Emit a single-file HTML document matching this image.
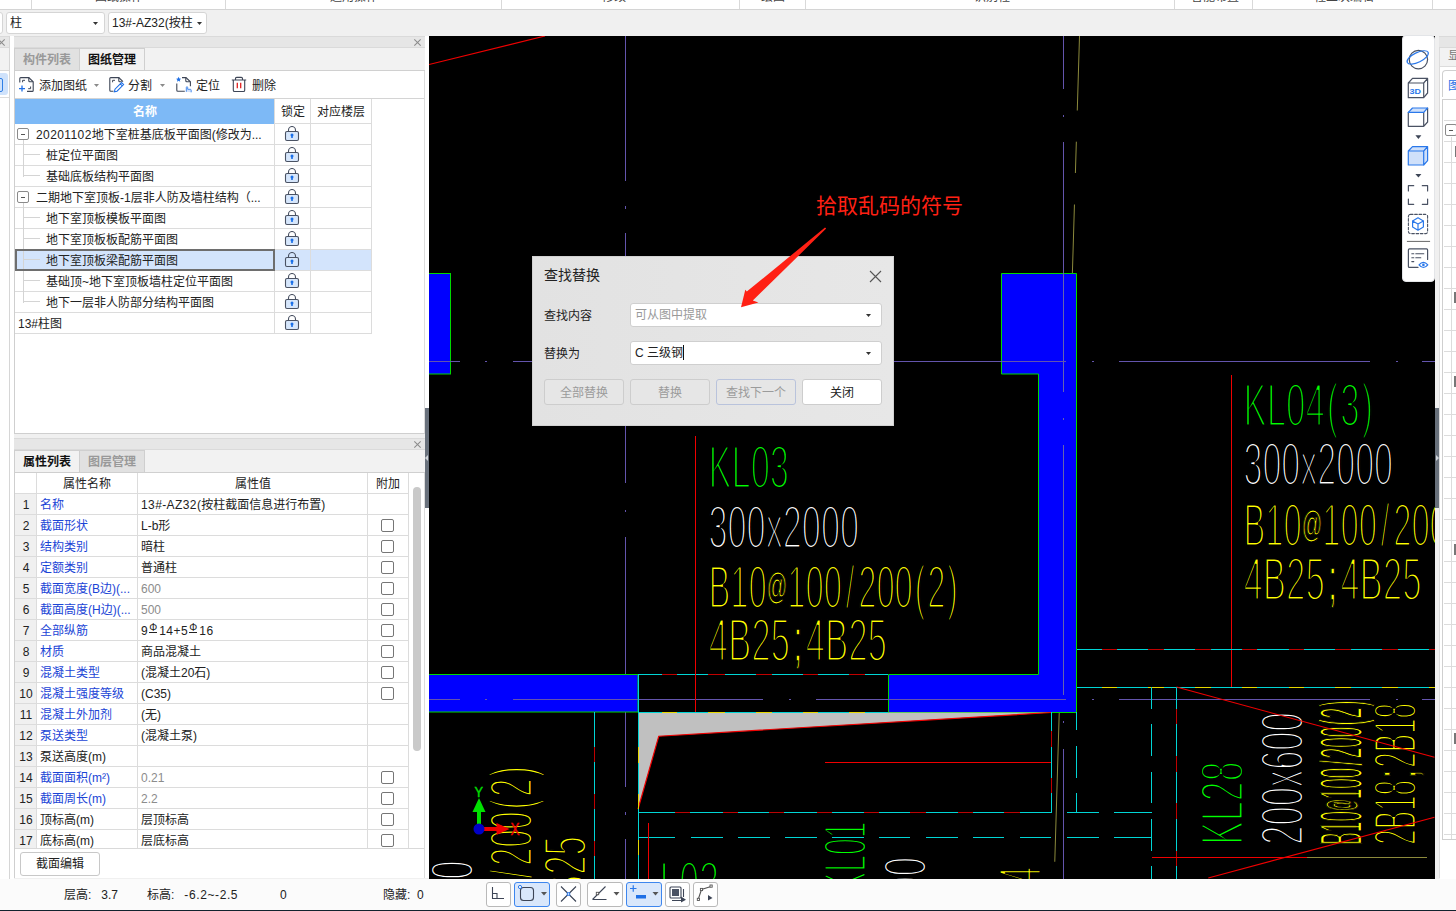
<!DOCTYPE html>
<html lang="zh-CN">
<head>
<meta charset="utf-8">
<title>查找替换</title>
<style>
*{box-sizing:border-box;margin:0;padding:0}
html,body{width:1456px;height:911px;overflow:hidden}
body{position:relative;background:#f0f0f0;font-family:"Liberation Sans","Noto Sans CJK SC",sans-serif;font-size:12px;color:#222;line-height:1}
.abs{position:absolute}
.t{position:absolute;white-space:nowrap;line-height:16px;height:16px}
/* top strip */
#strip{left:0;top:0;width:1456px;height:10px;background:#fff;border-bottom:1px solid #d4d4d4;overflow:hidden}
#strip .sep{position:absolute;top:0;width:1px;height:9px;background:#d9d9d9}
#strip .lb{position:absolute;top:-10px;line-height:14px;font-size:12px;color:#444;white-space:nowrap;transform:translateX(-50%)}
#tbar{left:0;top:10px;width:1456px;height:26px;background:#f0f0f0}
.dd{position:absolute;top:12px;height:22px;background:#fff;border:1px solid #d5d5d5;border-radius:3px;line-height:20px;padding-left:3px;white-space:nowrap;overflow:hidden}
.dd i{position:absolute;right:6px;top:9px;width:5px;height:3px;background:#333;clip-path:polygon(0 0,100% 0,50% 100%)}
/* panels */
.phead{position:absolute;background:#e6e6e6;border-top:1px solid #dadada;border-bottom:1px solid #dadada}
.px{position:absolute;width:9px;height:9px}
.px:before,.px:after{content:"";position:absolute;left:4px;top:0;width:1px;height:9px;background:#8a8a8a}
.px:before{transform:rotate(45deg)}.px:after{transform:rotate(-45deg)}
.tab{position:absolute;height:23px;width:65px;text-align:center;line-height:22px;border:1px solid #cfcfcf;font-weight:bold;font-size:12px}
.tab.off{background:#e1e1e1;color:#999}
.tab.on{background:#f2f2f2;color:#111}
.gl{background:#dcdcdc}
.tl{background:#d4d4d4}
.bx{width:12px;height:12px;border:1px solid #8a8a8a;border-radius:2px;background:#fff}
.bx:after{content:"";position:absolute;left:3px;top:4.5px;width:4px;height:1px;background:#555}
.ck{width:13px;height:13px;border:1px solid #767676;border-radius:2px;background:#fff}
.car{position:absolute;width:5px;height:3px;background:#8a8a8a;clip-path:polygon(0 0,100% 0,50% 100%)}
.phi{display:inline-block;font-weight:normal;font-size:10px;width:8px;margin:0 2px 0 1px;text-align:center;line-height:8px;height:9px;border-bottom:1px solid #222;position:relative;top:-4px;overflow:visible}
.inp{position:absolute;width:252px;height:24px;background:#fff;border:1px solid #cfcfcf;border-radius:3px;line-height:22px;padding-left:4px;white-space:nowrap}
.inp i{position:absolute;right:10px;top:10px;width:5px;height:3px;background:#333;clip-path:polygon(0 0,100% 0,50% 100%)}
.inp b{display:inline-block;width:1px;height:15px;background:#111;vertical-align:-3px;margin-left:0}
.btn{position:absolute;top:122px;width:80px;height:26px;border:1px solid #cdcdcd;border-radius:3px;text-align:center;line-height:26px;background:#e6e6e6;color:#9b9b9b}
.bb{position:absolute;top:882px;height:25px;background:#fff;border:1px solid #b9b9b9;border-radius:3px}
.bb.on{background:#d9e7fb;border-color:#3d86ee}

</style>
</head>
<body>
<svg width="0" height="0" style="position:absolute"><defs><g id="lock"><path d="M4.500 5.500V4.200a3.500 3.700 0 0 1 7 0V5.500" fill="none" stroke="#4a5263" stroke-width="1.100"/><rect x="1.500" y="5.500" width="13" height="9" rx="1.500" fill="#d6e6fb" stroke="#4a5263" stroke-width="1.100"/><circle cx="8" cy="9" r="1.500" fill="#1a6fe8"/><rect x="7.200" y="9" width="1.600" height="3" fill="#1a6fe8"/></g></defs></svg>
<!-- ribbon remainder -->
<div id="strip" class="abs">
<span class="sep" style="left:31px"></span><span class="sep" style="left:225px"></span><span class="sep" style="left:501px"></span><span class="sep" style="left:739px"></span><span class="sep" style="left:805px"></span><span class="sep" style="left:1174px"></span><span class="sep" style="left:1252px"></span><span class="sep" style="left:1432px"></span>
<span class="lb" style="left:119px">图纸操作</span><span class="lb" style="left:354px">通用操作</span><span class="lb" style="left:614px">修改</span><span class="lb" style="left:773px">绘图</span><span class="lb" style="left:992px">识别柱</span><span class="lb" style="left:1215px">智能布置</span><span class="lb" style="left:1344px">柱二次编辑</span>
</div>
<div id="tbar" class="abs"></div>
<div class="dd" style="left:-20px;width:23px"></div>
<div class="dd" style="left:6px;width:99px;font-size:12px">柱<i></i></div>
<div class="dd" style="left:108px;width:99px;font-size:12px">13#-AZ32(按柱<i style="right:4px"></i></div>
<div class="abs" style="left:0;top:36px;width:10px;height:843px;background:#fff;border-right:1px solid #d6d6d6"></div>
<div class="abs" style="left:0;top:48px;width:9px;height:23px;background:#f2f2f2;border-bottom:1px solid #d8d8d8"></div>
<div class="abs" style="left:0;top:97px;width:9px;height:1px;background:#dcdcdc"></div>
<div class="abs" style="left:10px;top:36px;width:4px;height:843px;background:#fff"></div>
<div class="abs" style="left:0;top:36px;width:9px;height:12px;background:#e6e6e6;border-top:1px solid #dadada;border-bottom:1px solid #dadada"></div>
<div class="px" style="left:-3px;top:38px"></div>
<div class="abs" style="left:-6px;top:73px;width:14px;height:22px;background:#cfe2fb;border-radius:3px"></div>
<div class="abs" style="left:-8px;top:78px;width:11px;height:14px;border:1.5px solid #2f7fe6;border-radius:2px"></div>
<div class="abs" style="left:14px;top:36px;width:411px;height:398px;background:#fff;border-left:1px solid #cfcfcf;border-bottom:1px solid #cfcfcf;border-right:1px solid #dcdcdc"></div>
<div class="phead" style="left:14px;top:36px;width:411px;height:12px"></div>
<div class="px" style="left:413px;top:38px"></div>
<div class="abs" style="left:14px;top:48px;width:411px;height:23px;background:#f2f2f2;border-bottom:1px solid #d0d0d0"></div>
<div class="tab off" style="left:14px;top:48px;width:66px">构件列表</div>
<div class="tab on" style="left:79px;top:48px;width:66px">图纸管理</div>
<div class="abs" style="left:15px;top:71px;width:409px;height:28px;background:#fff;border-bottom:1px solid #d4d4d4"></div>
<svg class="abs" style="left:18px;top:76px" width="18" height="17" viewBox="0 0 18 17" fill="none" stroke="#3d4556" stroke-width="1.1"><path d="M1.8 6.5V2.6q0-1 1-1h8l4.4 4.2v8.6q0 1-1 1H9"/><path d="M10.8 1.6v3.2q0 1 1 1h3.2" /><path d="M4.6 6.3V4.3h2.4M12.6 10.5v2.2h-2.4" stroke-width="1"/><path d="M4 9.6v6M1 12.6h6" stroke="#1f6fe5" stroke-width="1.3"/></svg>
<svg class="abs" style="left:108px;top:76px" width="18" height="17" viewBox="0 0 18 17" fill="none" stroke="#3d4556" stroke-width="1.1"><path d="M5.5 15.3H2.8q-1 0-1-1V2.6q0-1 1-1h8l4.2 4"/><path d="M10.8 1.6v3.2q0 1 1 1h2" /><path d="M4.6 6.3V4.3h2.4" stroke-width="1"/><path d="M13.6 6.6l2 2-6.6 6.6-2.6.6.6-2.6z M12.3 7.9l2 2" stroke="#1f6fe5" stroke-width="1.1"/></svg>
<svg class="abs" style="left:175px;top:76px" width="18" height="17" viewBox="0 0 18 17" fill="none" stroke="#3d4556" stroke-width="1.1"><path d="M1.8 7.5v6.8q0 1 1 1h7"/><path d="M7 1.6h4l4.4 4.2v4.4"/><path d="M10.8 1.6v3.2q0 1 1 1h3.2"/><path d="M3.6.8l.8 1.6 1.7.3-1.3 1.2.4 1.8-1.6-.9-1.6.9.4-1.800-1.300-1.200 1.700-.3z" fill="#1f6fe5" stroke="none"/><path d="M11.300 15.800v-4.300q0-.8.700-.8t.7.800v1.800h2.600q.9 0 .9.900v2.100" stroke="#4a8bec" fill="#cfe1fb" stroke-width="1"/></svg>
<svg class="abs" style="left:231px;top:76px" width="16" height="17" viewBox="0 0 16 17" fill="none" stroke="#3d4556" stroke-width="1.1"><path d="M.8 4h14.400M4.500 4V2.600q0-1.200 1.200-1.200h4.600q1.200 0 1.200 1.200V4M2.300 4v10.200q0 1.300 1.300 1.300h8.800q1.300 0 1.300-1.300V4"/><path d="M6.300 6.800v5.400M9.700 6.800v5.400" stroke="#e02020" stroke-width="1.3"/></svg>

<span class="t" style="left:39px;top:78px">添加图纸</span>
<span class="t" style="left:128px;top:78px">分割</span>
<span class="t" style="left:196px;top:78px">定位</span>
<span class="t" style="left:252px;top:78px">删除</span>
<i class="car" style="left:94px;top:84px"></i><i class="car" style="left:160px;top:84px"></i>
<div class="abs" style="left:15px;top:99px;width:260px;height:25px;background:#7db9f6"></div>
<span class="t" style="left:133px;top:104px;color:#fff;font-weight:bold">名称</span>
<span class="t" style="left:281px;top:104px">锁定</span>
<span class="t" style="left:317px;top:104px">对应楼层</span>
<div class="abs" style="left:15px;top:250px;width:356px;height:21px;background:#d3e4fc"></div>
<div class="abs gl" style="left:275px;top:123px;width:97px;height:1px"></div>
<div class="abs gl" style="left:15px;top:144px;width:357px;height:1px"></div>
<div class="abs gl" style="left:15px;top:165px;width:357px;height:1px"></div>
<div class="abs gl" style="left:15px;top:186px;width:357px;height:1px"></div>
<div class="abs gl" style="left:15px;top:207px;width:357px;height:1px"></div>
<div class="abs gl" style="left:15px;top:228px;width:357px;height:1px"></div>
<div class="abs gl" style="left:15px;top:249px;width:357px;height:1px"></div>
<div class="abs gl" style="left:15px;top:270px;width:357px;height:1px"></div>
<div class="abs gl" style="left:15px;top:291px;width:357px;height:1px"></div>
<div class="abs gl" style="left:15px;top:312px;width:357px;height:1px"></div>
<div class="abs gl" style="left:15px;top:333px;width:357px;height:1px"></div>
<div class="abs gl" style="left:274px;top:99px;width:1px;height:235px"></div>
<div class="abs gl" style="left:310px;top:99px;width:1px;height:235px"></div>
<div class="abs gl" style="left:371px;top:99px;width:1px;height:235px"></div>
<div class="abs tl" style="left:23px;top:140px;width:1px;height:37px"></div>
<div class="abs tl" style="left:23px;top:203px;width:1px;height:100px"></div>
<div class="abs bx" style="left:17px;top:128px"></div>
<span class="t" style="left:36px;top:127px"><span style="letter-spacing:.4px">20201102</span>地下室桩基底板平面图(修改为...</span>
<svg class="abs" style="left:284px;top:126px" width="16" height="17" viewBox="0 0 16 17"><use href="#lock"/></svg>
<div class="abs tl" style="left:23px;top:154px;width:17px;height:1px"></div>
<span class="t" style="left:46px;top:148px">桩定位平面图</span>
<svg class="abs" style="left:284px;top:147px" width="16" height="17" viewBox="0 0 16 17"><use href="#lock"/></svg>
<div class="abs tl" style="left:23px;top:175px;width:17px;height:1px"></div>
<span class="t" style="left:46px;top:169px">基础底板结构平面图</span>
<svg class="abs" style="left:284px;top:168px" width="16" height="17" viewBox="0 0 16 17"><use href="#lock"/></svg>
<div class="abs bx" style="left:17px;top:191px"></div>
<span class="t" style="left:36px;top:190px">二期地下室顶板-1层非人防及墙柱结构（...</span>
<svg class="abs" style="left:284px;top:189px" width="16" height="17" viewBox="0 0 16 17"><use href="#lock"/></svg>
<div class="abs tl" style="left:23px;top:217px;width:17px;height:1px"></div>
<span class="t" style="left:46px;top:211px">地下室顶板模板平面图</span>
<svg class="abs" style="left:284px;top:210px" width="16" height="17" viewBox="0 0 16 17"><use href="#lock"/></svg>
<div class="abs tl" style="left:23px;top:238px;width:17px;height:1px"></div>
<span class="t" style="left:46px;top:232px">地下室顶板板配筋平面图</span>
<svg class="abs" style="left:284px;top:231px" width="16" height="17" viewBox="0 0 16 17"><use href="#lock"/></svg>
<div class="abs tl" style="left:23px;top:259px;width:17px;height:1px"></div>
<span class="t" style="left:46px;top:253px">地下室顶板梁配筋平面图</span>
<svg class="abs" style="left:284px;top:252px" width="16" height="17" viewBox="0 0 16 17"><use href="#lock"/></svg>
<div class="abs tl" style="left:23px;top:280px;width:17px;height:1px"></div>
<span class="t" style="left:46px;top:274px">基础顶~地下室顶板墙柱定位平面图</span>
<svg class="abs" style="left:284px;top:273px" width="16" height="17" viewBox="0 0 16 17"><use href="#lock"/></svg>
<div class="abs tl" style="left:23px;top:301px;width:17px;height:1px"></div>
<span class="t" style="left:46px;top:295px">地下一层非人防部分结构平面图</span>
<svg class="abs" style="left:284px;top:294px" width="16" height="17" viewBox="0 0 16 17"><use href="#lock"/></svg>
<span class="t" style="left:18px;top:316px">13#柱图</span>
<svg class="abs" style="left:284px;top:315px" width="16" height="17" viewBox="0 0 16 17"><use href="#lock"/></svg>
<div class="abs" style="left:15px;top:249px;width:260px;height:22px;border:2px solid #6e6e6e"></div>
<div class="abs" style="left:14px;top:438px;width:411px;height:440px;background:#fff;border-left:1px solid #cfcfcf;border-right:1px solid #dcdcdc"></div>
<div class="phead" style="left:14px;top:438px;width:411px;height:12px"></div>
<div class="px" style="left:413px;top:440px"></div>
<div class="abs" style="left:14px;top:450px;width:411px;height:23px;background:#f2f2f2;border-bottom:1px solid #d0d0d0"></div>
<div class="tab on" style="left:14px;top:450px;width:66px;height:23px">属性列表</div>
<div class="tab off" style="left:79px;top:450px;width:66px;height:23px">图层管理</div>
<span class="t" style="left:63px;top:476px">属性名称</span>
<span class="t" style="left:235px;top:476px">属性值</span>
<span class="t" style="left:376px;top:476px">附加</span>
<div class="abs" style="left:15px;top:494px;width:22px;height:354px;background:#f0f0f0"></div>
<div class="abs gl" style="left:15px;top:493px;width:394px;height:1px"></div>
<div class="abs gl" style="left:15px;top:514px;width:394px;height:1px"></div>
<div class="abs gl" style="left:15px;top:535px;width:394px;height:1px"></div>
<div class="abs gl" style="left:15px;top:556px;width:394px;height:1px"></div>
<div class="abs gl" style="left:15px;top:577px;width:394px;height:1px"></div>
<div class="abs gl" style="left:15px;top:598px;width:394px;height:1px"></div>
<div class="abs gl" style="left:15px;top:619px;width:394px;height:1px"></div>
<div class="abs gl" style="left:15px;top:640px;width:394px;height:1px"></div>
<div class="abs gl" style="left:15px;top:661px;width:394px;height:1px"></div>
<div class="abs gl" style="left:15px;top:682px;width:394px;height:1px"></div>
<div class="abs gl" style="left:15px;top:703px;width:394px;height:1px"></div>
<div class="abs gl" style="left:15px;top:724px;width:394px;height:1px"></div>
<div class="abs gl" style="left:15px;top:745px;width:394px;height:1px"></div>
<div class="abs gl" style="left:15px;top:766px;width:394px;height:1px"></div>
<div class="abs gl" style="left:15px;top:787px;width:394px;height:1px"></div>
<div class="abs gl" style="left:15px;top:808px;width:394px;height:1px"></div>
<div class="abs gl" style="left:15px;top:829px;width:394px;height:1px"></div>
<div class="abs gl" style="left:36px;top:473px;width:1px;height:375px"></div>
<div class="abs gl" style="left:137px;top:473px;width:1px;height:375px"></div>
<div class="abs gl" style="left:367px;top:473px;width:1px;height:375px"></div>
<div class="abs gl" style="left:408px;top:473px;width:1px;height:375px"></div>
<span class="t" style="left:15px;width:22px;text-align:center;top:497px">1</span>
<span class="t" style="left:40px;top:497px;color:#1a44d6">名称</span>
<span class="t" style="left:141px;top:497px;color:#222"><span style="letter-spacing:.4px">13#-AZ32(</span>按柱截面信息进行布置)</span>
<span class="t" style="left:15px;width:22px;text-align:center;top:518px">2</span>
<span class="t" style="left:40px;top:518px;color:#1a44d6">截面形状</span>
<span class="t" style="left:141px;top:518px;color:#222">L-b形</span>
<div class="abs ck" style="left:381px;top:519px"></div>
<span class="t" style="left:15px;width:22px;text-align:center;top:539px">3</span>
<span class="t" style="left:40px;top:539px;color:#1a44d6">结构类别</span>
<span class="t" style="left:141px;top:539px;color:#222">暗柱</span>
<div class="abs ck" style="left:381px;top:540px"></div>
<span class="t" style="left:15px;width:22px;text-align:center;top:560px">4</span>
<span class="t" style="left:40px;top:560px;color:#1a44d6">定额类别</span>
<span class="t" style="left:141px;top:560px;color:#222">普通柱</span>
<div class="abs ck" style="left:381px;top:561px"></div>
<span class="t" style="left:15px;width:22px;text-align:center;top:581px">5</span>
<span class="t" style="left:40px;top:581px;color:#1a44d6">截面宽度(B边)(...</span>
<span class="t" style="left:141px;top:581px;color:#8c8c8c">600</span>
<div class="abs ck" style="left:381px;top:582px"></div>
<span class="t" style="left:15px;width:22px;text-align:center;top:602px">6</span>
<span class="t" style="left:40px;top:602px;color:#1a44d6">截面高度(H边)(...</span>
<span class="t" style="left:141px;top:602px;color:#8c8c8c">500</span>
<div class="abs ck" style="left:381px;top:603px"></div>
<span class="t" style="left:15px;width:22px;text-align:center;top:623px">7</span>
<span class="t" style="left:40px;top:623px;color:#1a44d6">全部纵筋</span>
<span class="t" style="left:141px;top:623px;color:#222"><span style="letter-spacing:.5px">9<b class="phi">Φ</b>14+5<b class="phi">Φ</b>16</span></span>
<div class="abs ck" style="left:381px;top:624px"></div>
<span class="t" style="left:15px;width:22px;text-align:center;top:644px">8</span>
<span class="t" style="left:40px;top:644px;color:#1a44d6">材质</span>
<span class="t" style="left:141px;top:644px;color:#222">商品混凝土</span>
<div class="abs ck" style="left:381px;top:645px"></div>
<span class="t" style="left:15px;width:22px;text-align:center;top:665px">9</span>
<span class="t" style="left:40px;top:665px;color:#1a44d6">混凝土类型</span>
<span class="t" style="left:141px;top:665px;color:#222">(混凝土20石)</span>
<div class="abs ck" style="left:381px;top:666px"></div>
<span class="t" style="left:15px;width:22px;text-align:center;top:686px">10</span>
<span class="t" style="left:40px;top:686px;color:#1a44d6">混凝土强度等级</span>
<span class="t" style="left:141px;top:686px;color:#222">(C35)</span>
<div class="abs ck" style="left:381px;top:687px"></div>
<span class="t" style="left:15px;width:22px;text-align:center;top:707px">11</span>
<span class="t" style="left:40px;top:707px;color:#1a44d6">混凝土外加剂</span>
<span class="t" style="left:141px;top:707px;color:#222">(无)</span>
<span class="t" style="left:15px;width:22px;text-align:center;top:728px">12</span>
<span class="t" style="left:40px;top:728px;color:#1a44d6">泵送类型</span>
<span class="t" style="left:141px;top:728px;color:#222">(混凝土泵)</span>
<span class="t" style="left:15px;width:22px;text-align:center;top:749px">13</span>
<span class="t" style="left:40px;top:749px;color:#222">泵送高度(m)</span>
<span class="t" style="left:15px;width:22px;text-align:center;top:770px">14</span>
<span class="t" style="left:40px;top:770px;color:#1a44d6">截面面积(m²)</span>
<span class="t" style="left:141px;top:770px;color:#8c8c8c">0.21</span>
<div class="abs ck" style="left:381px;top:771px"></div>
<span class="t" style="left:15px;width:22px;text-align:center;top:791px">15</span>
<span class="t" style="left:40px;top:791px;color:#1a44d6">截面周长(m)</span>
<span class="t" style="left:141px;top:791px;color:#8c8c8c">2.2</span>
<div class="abs ck" style="left:381px;top:792px"></div>
<span class="t" style="left:15px;width:22px;text-align:center;top:812px">16</span>
<span class="t" style="left:40px;top:812px;color:#222">顶标高(m)</span>
<span class="t" style="left:141px;top:812px;color:#222">层顶标高</span>
<div class="abs ck" style="left:381px;top:813px"></div>
<span class="t" style="left:15px;width:22px;text-align:center;top:833px">17</span>
<span class="t" style="left:40px;top:833px;color:#222">底标高(m)</span>
<span class="t" style="left:141px;top:833px;color:#222">层底标高</span>
<div class="abs ck" style="left:381px;top:834px"></div>
<div class="abs" style="left:15px;top:848px;width:409px;height:30px;background:#fff;border-top:1px solid #d9d9d9"></div>
<div class="abs" style="left:413px;top:487px;width:8px;height:264px;background:#c9c9c9;border-radius:4px"></div>
<div class="abs" style="left:20px;top:852px;width:80px;height:24px;background:#fff;border:1px solid #c8c8c8;border-radius:3px;text-align:center;line-height:22px">截面编辑</div>
<div class="abs" style="left:425px;top:36px;width:4px;height:842px;background:#fff"></div>
<div class="abs" style="left:425px;top:408px;width:4px;height:100px;background:#69717c"></div>
<div class="abs" style="left:425px;top:455px;width:0;height:0;border:3px solid transparent;border-right:3px solid #cfd3d8;border-left:0"></div>
<svg class="abs" style="left:429px;top:36px;background:#000" width="1006" height="843" viewBox="429 36 1006 843" font-family="'Liberation Sans',sans-serif">
<line x1="429" y1="64.5" x2="545" y2="36" stroke="#f00000" stroke-width="1.2"/>
<line x1="1079.5" y1="36" x2="1077.27" y2="110.5" stroke="#8c8a3c" stroke-width="1"/>
<line x1="1076.33" y1="141.7" x2="1075.40" y2="173" stroke="#8c8a3c" stroke-width="1"/>
<line x1="1074.45" y1="204.5" x2="1054.77" y2="861.75" stroke="#8c8a3c" stroke-width="1"/>
<path d="M625.5 36V180.5 M625.5 206V208.5 M625.5 233V483 M625.5 509.5V512 M625.5 536.75V786.75 M625.5 812V814.5 M625.5 839V879" stroke="#6354ad" stroke-width="1" fill="none" shape-rendering="crispEdges"/>
<rect x="420" y="273.5" width="30.500" height="100.500" fill="#0000ff" stroke="#00d800" stroke-width="1"/>
<rect x="420" y="674.500" width="218" height="37.500" fill="#0000ff" stroke="#00d800" stroke-width="1"/>
<path d="M1001.5 273.500H1076.5V712.500H888.500V674.500H1038.500V374H1001.500Z" fill="#0000ff" stroke="#00d800" stroke-width="1"/>
<path d="M1063.5 36V89 M1063.5 115V117 M1063.5 141.75V273" stroke="#6354ad" stroke-width="1" fill="none" shape-rendering="crispEdges"/>
<path d="M1063.5 273V391.75 M1063.5 417.5V419.5 M1063.5 445V694.75" stroke="#6462b0" stroke-width="1" fill="none" shape-rendering="crispEdges"/>
<path d="M1063.5 721V723 M1063.5 748.5V879" stroke="#6354ad" stroke-width="1" fill="none" shape-rendering="crispEdges"/>
<path d="M429 361.5H460 M485 361.5H487 M512.5 361.5H762.5 M788.5 361.5H790.5 M816 361.5H1066 M1092 361.5H1094 M1119 361.5H1369.5 M1396 361.5H1398 M1422 361.5H1435" stroke="#6354ad" stroke-width="1" fill="none" shape-rendering="crispEdges"/>
<path d="M429 699.5H460 M485 699.5H487 M512.5 699.5H762.5 M788.5 699.5H790.5 M816 699.5H1066 M1092 699.5H1094 M1119 699.5H1369.5 M1396 699.5H1398 M1422 699.5H1435" stroke="#6354ad" stroke-width="1" fill="none" shape-rendering="crispEdges"/>
<path d="M638 712.500H1051.500L658.750 736.250L638 809.250Z" fill="#c0c0c0"/>
<path d="M1051.500 712.500L658.750 736.250L638 809.250" fill="none" stroke="#f00000" stroke-width="1.2"/>
<path d="M638 674.5H888" stroke="#00d5d5" stroke-width="1" fill="none" shape-rendering="crispEdges"/>
<path d="M661.8 674.5H677 M708 674.5H724.6 M755.5 674.5H771.7 M802.6 674.5H818 M849 674.5H865.4" stroke="#c00000" stroke-width="1" fill="none" shape-rendering="crispEdges"/>
<path d="M638 712.5H888" stroke="#00d5d5" stroke-width="1" fill="none" shape-rendering="crispEdges"/>
<path d="M661.8 712.5H677 M708 712.5H724.6 M755.5 712.5H771.7 M802.6 712.5H818 M849 712.5H865.4" stroke="#e6d800" stroke-width="1" fill="none" shape-rendering="crispEdges"/>
<path d="M638.5 674V879" stroke="#00d5d5" stroke-width="1" fill="none" shape-rendering="crispEdges"/>
<path d="M638.5 747V763 M638.5 794V809 M638.5 840V855" stroke="#e6d800" stroke-width="1" fill="none" shape-rendering="crispEdges"/>
<path d="M695.5 436V712" stroke="#f00000" stroke-width="1" fill="none" shape-rendering="crispEdges"/>
<path d="M1231.5 375V686.5" stroke="#f00000" stroke-width="1" fill="none" shape-rendering="crispEdges"/>
<path d="M1077 649.5H1435" stroke="#00d5d5" stroke-width="1" fill="none" shape-rendering="crispEdges"/>
<path d="M1101.5 649.5H1117.0 M1148.25 649.5H1163.75 M1195.0 649.5H1210.5 M1241.75 649.5H1257.25 M1288.5 649.5H1304.0 M1335.25 649.5H1350.75 M1382.0 649.5H1397.5 M1428.75 649.5H1444.25" stroke="#c00000" stroke-width="1" fill="none" shape-rendering="crispEdges"/>
<path d="M1077 687.5H1435" stroke="#00d5d5" stroke-width="1" fill="none" shape-rendering="crispEdges"/>
<path d="M1101.5 687.5H1117.0 M1148.25 687.5H1163.75 M1195.0 687.5H1210.5 M1241.75 687.5H1257.25 M1288.5 687.5H1304.0 M1335.25 687.5H1350.75 M1382.0 687.5H1397.5 M1428.75 687.5H1444.25" stroke="#e6d800" stroke-width="1" fill="none" shape-rendering="crispEdges"/>
<path d="M1151.5 687V709.25 M1151.5 724.25V756.25 M1151.5 771.75V803 M1151.5 819.25V850.5 M1151.5 865.5V879" stroke="#00d5d5" stroke-width="1" fill="none" shape-rendering="crispEdges"/>
<path d="M1176.5 687V879" stroke="#00d5d5" stroke-width="1" fill="none" shape-rendering="crispEdges"/>
<path d="M1176.5 709.25V724.25 M1176.5 756.25V771.75 M1176.5 803V819.25 M1176.5 850.5V865.5" stroke="#c00000" stroke-width="1" fill="none" shape-rendering="crispEdges"/>
<path d="M594.5 712V879" stroke="#00d5d5" stroke-width="1" fill="none" shape-rendering="crispEdges"/>
<path d="M594.5 746.75V761.75 M594.5 794V809 M594.5 840.5V855.5" stroke="#c00000" stroke-width="1" fill="none" shape-rendering="crispEdges"/>
<path d="M638 812.5H1051" stroke="#00d5d5" stroke-width="1" fill="none" shape-rendering="crispEdges"/>
<path d="M675 812.5H690 M722.5 812.5H737.5 M768.75 812.5H784 M816.5 812.5H832 M863.5 812.5H879 M910 812.5H925.75 M957.75 812.5H972.75 M1004 812.5H1019.5" stroke="#c00000" stroke-width="1" fill="none" shape-rendering="crispEdges"/>
<path d="M638 837.5H675 M691 837.5H722.5 M737.5 837.5H770 M785 837.5H816.5 M832 837.5H863.5 M879 837.5H910 M925.75 837.5H957.75 M972.75 837.5H1004 M1019.5 837.5H1051 M1066.5 837.5H1099 M1114 837.5H1151.5" stroke="#00d5d5" stroke-width="1" fill="none" shape-rendering="crispEdges"/>
<path d="M1066.5 812.5H1099 M1114 812.5H1151.5" stroke="#00d5d5" stroke-width="1" fill="none" shape-rendering="crispEdges"/>
<path d="M1051.5 712V812.5" stroke="#00d5d5" stroke-width="1" fill="none" shape-rendering="crispEdges"/>
<path d="M1051.5 730.5V746.75 M1051.5 778V793" stroke="#c00000" stroke-width="1" fill="none" shape-rendering="crispEdges"/>
<path d="M1076.5 712V730 M1076.5 746V778 M1076.5 793V812" stroke="#00d5d5" stroke-width="1" fill="none" shape-rendering="crispEdges"/>
<path d="M824.75 762.5H1051" stroke="#f00000" stroke-width="1" fill="none" shape-rendering="crispEdges"/>
<path d="M648.5 823V879" stroke="#f00000" stroke-width="1" fill="none" shape-rendering="crispEdges"/>
<g font-size="60.5" stroke="#000" stroke-width="3.1">
<text x="708.5" y="487.8" dx="0 0 0 0" textLength="80.5" lengthAdjust="spacingAndGlyphs" fill="#00ff00">KL03</text>
<text x="708.5" y="547.8" dx="0 0 0 0 0 0 0 0" textLength="150.5" lengthAdjust="spacingAndGlyphs" fill="#ffffff">300x2000</text>
<text x="708.5" y="607.6999999999999" dx="0 0 0 0 0 0 0 6.7 6.7 0 0 3.2 3.2 3.2" textLength="249.5" lengthAdjust="spacingAndGlyphs" fill="#ffff00">B10<tspan font-size="37.5" stroke-width="1.24" dy="-9">@</tspan><tspan dy="9">100/200(2)</tspan></text>
<text x="708.5" y="661.0" dx="0 0 0 0 5.0 5.0 0 0 0" textLength="178.5" lengthAdjust="spacingAndGlyphs" fill="#ffff00">4B25<tspan stroke-width="1.71">;</tspan>4B25</text>
<text x="1243.5" y="426.3" dx="0 0 0 0 3.2 3.2 3.2" textLength="129.5" lengthAdjust="spacingAndGlyphs" fill="#00ff00">KL04(3)</text>
<text x="1243.5" y="485.3" dx="0 0 0 0 0 0 0 0" textLength="149.5" lengthAdjust="spacingAndGlyphs" fill="#ffffff">300x2000</text>
<text x="1243.5" y="546.3" dx="0 0 0 0 0 0 0 6.7 6.7 0 0 3.2 3.2 3.2" textLength="249.5" lengthAdjust="spacingAndGlyphs" fill="#ffff00">B10<tspan font-size="37.5" stroke-width="1.24" dy="-9">@</tspan><tspan dy="9">100/200(2)</tspan></text>
<text x="1243.5" y="599.55" dx="0 0 0 0 5.0 5.0 0 0 0" textLength="178.0" lengthAdjust="spacingAndGlyphs" fill="#ffff00">4B25<tspan stroke-width="1.71">;</tspan>4B25</text>
<text x="659.5" y="903.8" dx="0 0 0" textLength="59.5" lengthAdjust="spacingAndGlyphs" fill="#00ff00">L03</text>
<text transform="translate(1243.05 844.75) rotate(-90)" dx="0 0 0 0" textLength="83.25" lengthAdjust="spacingAndGlyphs" fill="#00ff00">KL28</text>
<text transform="translate(1303.05 844.75) rotate(-90)" dx="0 0 0 0 0 0 0" textLength="132.5" lengthAdjust="spacingAndGlyphs" fill="#ffffff">200x600</text>
<text transform="translate(1362.3 844.75) rotate(-90)" stroke-width="2.3" dx="0 0 0 0 0 0 0 6.7 6.7 0 0 3.2 3.2 3.2" textLength="144.25" lengthAdjust="spacingAndGlyphs" fill="#ffff00">B10<tspan font-size="37.5" stroke-width="1.24" dy="-9">@</tspan><tspan dy="9">100/200(2)</tspan></text>
<text transform="translate(1416.05 844.75) rotate(-90)" dx="0 0 0 0 5.0 5.0 0 0 0" textLength="141.75" lengthAdjust="spacingAndGlyphs" fill="#ffff00">2B18<tspan stroke-width="1.71">;</tspan>2B18</text>
<text transform="translate(532.3 1015.5) rotate(-90)" dx="0 0 0 0 0 0 0 6.7 6.7 0 0 3.2 3.2 3.2" textLength="249.5" lengthAdjust="spacingAndGlyphs" fill="#ffff00">B10<tspan font-size="37.5" stroke-width="1.24" dy="-9">@</tspan><tspan dy="9">100/200(2)</tspan></text>
<text transform="translate(586.05 1014.5) rotate(-90)" dx="0 0 0 0 5.0 5.0 0 0 0" textLength="178.5" lengthAdjust="spacingAndGlyphs" fill="#ffff00">4B25<tspan stroke-width="1.71">;</tspan>4B25</text>
<text transform="translate(473.05 1011.0) rotate(-90)" dx="0 0 0 0 0 0 0 0" textLength="150.5" lengthAdjust="spacingAndGlyphs" fill="#ffffff">300x2000</text>
<text transform="translate(866.3 892.0) rotate(-90)" dx="0 0 0 0" textLength="70.5" lengthAdjust="spacingAndGlyphs" fill="#00ff00">KL01</text>
<text transform="translate(926.3 989.5) rotate(-90)" dx="0 0 0 0 0 0 0" textLength="132.5" lengthAdjust="spacingAndGlyphs" fill="#ffffff">200x500</text>
<text transform="translate(1041.3 1008.5) rotate(-90)" dx="0 0 0 0 5.0 5.0 0 0 0" textLength="141.5" lengthAdjust="spacingAndGlyphs" fill="#ffff00">2B18<tspan stroke-width="1.71">;</tspan>2B14</text>
</g>
<path d="M1151.5 857H1307" stroke="#f00000" stroke-width="1" fill="none" shape-rendering="crispEdges"/>
<path d="M1307 857H1427" stroke="#8c8a3c" stroke-width="1" fill="none" shape-rendering="crispEdges"/>
<line x1="1176.5" y1="687" x2="1434.5" y2="757.25" stroke="#f00000" stroke-width="1.1"/>
<line x1="1208.25" y1="878" x2="1434.5" y2="817.25" stroke="#f00000" stroke-width="1.1"/>
<g><rect x="477" y="809" width="4" height="20" fill="#00e000"/><path d="M479 798l6.500 14h-13z" fill="#00e000"/><rect x="482" y="827" width="17" height="4" fill="#f00000"/><path d="M509.500 829l-13-6v12z" fill="#f00000"/><circle cx="479" cy="829" r="5.500" fill="#0000c8"/><text x="474.500" y="797" font-size="14" fill="#00e000" stroke="#00e000" stroke-width=".4" textLength="8.500" lengthAdjust="spacingAndGlyphs">Y</text><text x="510.500" y="835" font-size="16.500" fill="#f00000" stroke="#f00000" stroke-width=".4" textLength="9" lengthAdjust="spacingAndGlyphs">X</text></g>
</svg>
<div id="dlg" class="abs" style="left:532px;top:256px;width:362px;height:170px;background:linear-gradient(90deg,#e2e2e2,#e7e7e7);border:1px solid #d2d2d2">
<span class="t" style="left:11px;top:9px;font-size:14px;line-height:18px;height:18px;color:#222">查找替换</span>
<svg class="abs" style="left:336px;top:13px" width="13" height="13" viewBox="0 0 13 13"><path d="M1 1l11 11M12 1L1 12" stroke="#555" stroke-width="1.1" fill="none"/></svg>
<span class="t" style="left:11px;top:51px">查找内容</span>
<div class="inp" style="left:97px;top:46px"><span style="color:#9a9a9a">可从图中提取</span><i></i></div>
<span class="t" style="left:11px;top:89px">替换为</span>
<div class="inp" style="left:97px;top:84px"><span>C 三级钢</span><b></b><i></i></div>
<div class="btn dis" style="left:11px">全部替换</div>
<div class="btn dis" style="left:97px">替换</div>
<div class="btn dis" style="left:183px;border-color:#b9c3dc">查找下一个</div>
<div class="btn" style="left:269px;background:#fff;color:#222">关闭</div>
</div>
<!-- annotation -->
<div class="t" style="left:816px;top:192px;font-size:21px;line-height:28px;height:28px;color:#ff2014">拾取乱码的符号</div>
<svg class="abs" style="left:730px;top:220px" width="110" height="100" viewBox="730 220 110 100"><path d="M825 227.600L826.200 228.600L752.800 300.600L758.400 302.400L741 307.200L745.300 289.800L746.800 291.600Z" fill="#ff2014"/></svg>

<div class="abs" style="left:1402px;top:35px;width:33px;height:247px;background:#fff;border:1px solid #e3e5e8;border-radius:4px"></div>
<svg class="abs" style="left:1402px;top:36px" width="33" height="246" viewBox="1402 36 33 246" fill="none" stroke="#4a5263" stroke-width="1.2" stroke-linejoin="round" stroke-linecap="round">
<circle cx="1418.400" cy="59.600" r="9.200"/>
<ellipse cx="1417.700" cy="57.400" rx="11.600" ry="4.800" transform="rotate(-26 1417.700 57.400)" stroke="#2a78ea"/>
<path d="M1408.300 83h15.400v14.700h-15.400zM1408.300 83l4.200-4.600h15.100l-3.900 4.600M1427.600 78.400v14.600l-3.900 4.700"/>
<text x="1409.500" y="94.300" font-size="7.500" font-weight="bold" fill="#2a78ea" stroke="none" font-family="'Liberation Sans',sans-serif" textLength="11.500" lengthAdjust="spacingAndGlyphs">3D</text>
<path d="M1408.300 112.400h15.400v13.900h-15.400zM1427.600 108v14l-3.900 4.300"/>
<path d="M1408.300 112.400l4.200-4.400h15.100l-3.900 4.400z" fill="#cfe0fa" stroke="#2a78ea"/>
<path d="M1415.400 135.300h6l-3 3.600z" fill="#3d4556" stroke="none"/>
<path d="M1408.300 151h15.400v14h-15.400zM1408.300 151l4.200-4.400h15.100l-3.900 4.400zM1427.600 146.600v14l-3.900 4.400v-14z" fill="#cfe0fa" stroke="#2a78ea"/>
<path d="M1415.400 174h6l-3 3.600z" fill="#3d4556" stroke="none"/>
<path d="M1408.400 191v-5.300h5.300M1422.300 185.700h5.300v5.300M1427.600 199v5.300h-5.300M1413.700 204.300h-5.300v-5.300"/>
<rect x="1408.400" y="214.400" width="19.200" height="19.200" rx="2" stroke-dasharray="2.600 1.700" stroke-width="1.100"/>
<path d="M1418 217.800l5.400 3.100v6.200l-5.400 3.100l-5.400-3.100v-6.200zM1412.600 220.900l5.400 3.100l5.400-3.100M1418 224v6.200" stroke="#2a78ea"/>
<path d="M1407.300 241.400h22.400" stroke="#666" stroke-width="1"/>
<path d="M1418 267.400h-8.600q-1 0-1-1v-16.500q0-1 1-1h17.200q1 0 1 1v9.500"/>
<path d="M1411.800 253.800h2M1415.800 253.800h8M1411.800 257.700h2M1415.800 257.700h5M1411.800 261.600h2" stroke-width="1.100"/>
<path d="M1419 264.900q4.400-5.200 8.800 0q-4.400 5.200-8.800 0z" stroke="#2a78ea" fill="#fff"/><circle cx="1423.400" cy="264.900" r="1.300" fill="#2a78ea" stroke="none"/>
</svg>
<!-- right splitter + panel -->
<div class="abs" style="left:1435px;top:36px;width:4px;height:842px;background:#f0f0f0"></div>
<div class="abs" style="left:1435px;top:408px;width:4px;height:100px;background:#69717c"></div>
<div class="abs" style="left:1436px;top:455px;width:0;height:0;border:3px solid transparent;border-left:3px solid #cfd3d8;border-right:0"></div>
<div class="abs" style="left:1439px;top:36px;width:17px;height:842px;background:#f2f2f2;border-left:1px solid #dcdcdc"></div>
<div class="phead" style="left:1439px;top:36px;width:17px;height:12px"></div>
<span class="t" style="left:1448px;top:48px;color:#777">显示设置</span>
<div class="abs" style="left:1440px;top:66px;width:16px;height:813px;background:#fff;border-top:1px solid #dcdcdc"></div>
<div class="abs" style="left:1442px;top:70px;width:20px;height:27px;background:#fff;border:1px solid #d0d0d0;border-bottom:0;border-radius:4px 0 0 0"></div>
<span class="t" style="left:1448px;top:78px;color:#1f6fe5">图元显示</span>
<div class="abs" style="left:1442px;top:99px;width:14px;height:741px;border-left:1px solid #cfcfcf;border-top:1px solid #cfcfcf;border-bottom:1px solid #cfcfcf;background:#fff"></div>
<div class="abs" id="rgrid" style="left:1444px;top:120px;width:12px;height:719px;background:repeating-linear-gradient(180deg,#dcdcdc 0,#dcdcdc 1px,transparent 1px,transparent 21px)"></div>
<div class="abs gl" style="left:1451px;top:137px;width:1px;height:702px"></div>
<div class="abs bx" style="left:1445px;top:124px;background:#fff"></div>
<div class="abs" style="left:1455px;top:146px;width:2px;height:11px;background:#777"></div>
<div class="abs" style="left:1454px;top:292px;width:2px;height:11px;background:#777"></div>
<div class="abs" style="left:1454px;top:376px;width:2px;height:11px;background:#777"></div>
<div class="abs" style="left:1454px;top:544px;width:2px;height:11px;background:#777"></div>
<div class="abs" style="left:1454px;top:733px;width:2px;height:11px;background:#777"></div>

<div class="abs" style="left:0;top:879px;width:1456px;height:32px;background:#fbfbfb"></div>
<div class="abs" style="left:0;top:910px;width:1456px;height:1px;background:#12222d"></div>
<span class="t" style="left:64px;top:887px">层高:&nbsp;&nbsp; 3.7</span>
<span class="t" style="left:147px;top:887px">标高:&nbsp;&nbsp; <span style="letter-spacing:.6px">-6.2~-2.5</span></span>
<span class="t" style="left:280px;top:887px">0</span>
<span class="t" style="left:383px;top:887px">隐藏:&nbsp; 0</span>
<div class="bb" style="left:486px;width:25px"></div>
<div class="bb on" style="left:514px;width:36px"></div>
<div class="bb" style="left:556px;width:25px"></div>
<div class="bb" style="left:587px;width:36px"></div>
<div class="bb on" style="left:626px;width:36px"></div>
<div class="bb" style="left:665px;width:25px"></div>
<div class="bb" style="left:693px;width:25px"></div>
<svg class="abs" style="left:486px;top:882px" width="232" height="24" viewBox="486 883 232 24" fill="none" stroke="#3d4556" stroke-width="1.100">
<path d="M492.500 888v11.500h11.500M492.500 894.500h4.500v5"/>
<rect x="520.500" y="888.500" width="13" height="13" rx="3"/><circle cx="520" cy="888" r="1.600" fill="#fff" stroke="#2a78ea" stroke-width="1"/>
<path d="M541 893h6l-3 3.500z" fill="#555" stroke="none"/>
<path d="M561 887.500l15 15M576 887.500l-15 15"/><rect x="567.300" y="893.800" width="2.400" height="2.400" fill="#fff" stroke="#2a78ea" stroke-width="1"/>
<path d="M592.500 900.500l13-13M592.500 900.500h14"/><rect x="596.300" y="893.300" width="2.400" height="2.400" fill="#fff" stroke="#555" stroke-width=".9"/>
<path d="M613.500 893h6l-3 3.500z" fill="#555" stroke="none"/>
<path d="M630 889.500h6.500M633.250 886.250v6.500" stroke="#2a78ea" stroke-width="1.200"/><rect x="636" y="896" width="10" height="3.500" fill="#1f6fe5" stroke="none"/>
<path d="M652.500 893h6l-3 3.500z" fill="#555" stroke="none"/>
<rect x="670" y="888" width="11" height="11" rx="1" /><rect x="672" y="890" width="7" height="7" fill="#4a5263" stroke="none"/><path d="M672 901.500h9.500M683.500 890v8" /><path d="M681 897.500l5 3.300l-5 2.700z" fill="#3d4556" stroke="none"/>
<path d="M698.500 899.500l3-9l9.500-3" stroke="#555"/><rect x="697.300" y="899.300" width="2.200" height="2.200" fill="#fff" stroke="#555" stroke-width=".9"/><rect x="700.400" y="889.400" width="2.200" height="2.200" fill="#fff" stroke="#555" stroke-width=".9"/><rect x="710" y="886" width="2.200" height="2.200" fill="#fff" stroke="#555" stroke-width=".9"/><path d="M708 896l4.500 3l-4.500 2.600z" fill="#3d4556" stroke="none"/>
</svg>


</body>
</html>
